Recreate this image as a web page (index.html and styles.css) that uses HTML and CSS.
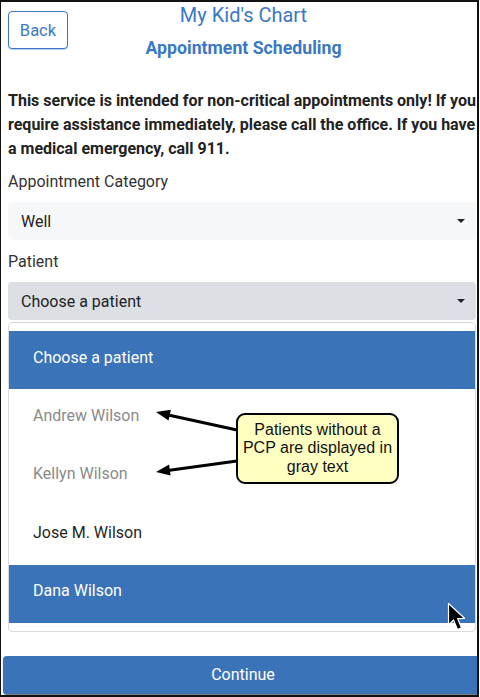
FILE: index.html
```html
<!DOCTYPE html>
<html lang="en">
<head>
<meta charset="utf-8">
<title>My Kid's Chart</title>
<link rel="stylesheet" href="styles.css">
</head>
<body>
<div class="frame">
  <div class="content">
    <header class="header">
      <button class="back">Back</button>
      <div class="titles">
        <div class="app-title">My Kid's Chart</div>
        <div class="page-title">Appointment Scheduling</div>
      </div>
      <div class="spacer"></div>
    </header>

    <p class="warning">This service is intended for non-critical appointments only! If you require assistance immediately, please call the office. If you have a medical emergency, call 911.</p>

    <div class="label label-first">Appointment Category</div>
    <div class="select select-light"><span>Well</span><span class="caret"></span></div>

    <div class="label">Patient</div>
    <div class="select select-open"><span>Choose a patient</span><span class="caret"></span></div>

    <ul class="dropdown">
      <li class="option selected">Choose a patient</li>
      <li class="option muted">Andrew Wilson</li>
      <li class="option muted">Kellyn Wilson</li>
      <li class="option">Jose M. Wilson</li>
      <li class="option selected">Dana Wilson</li>
    </ul>

    <button class="continue">Continue</button>
  </div>

  <svg class="arrows" width="480" height="697" viewBox="0 0 480 697" aria-hidden="true">
    <line x1="237" y1="430" x2="166" y2="414.5" stroke="#000" stroke-width="3"/>
    <polygon points="156,412 168.5,420.5 170.9,409.7" fill="#000"/>
    <line x1="237" y1="461" x2="166" y2="470.7" stroke="#000" stroke-width="3"/>
    <polygon points="156,472 170.6,475.5 169.1,464.6" fill="#000"/>
    <path d="M448.5 603.5 L448.5 625 L453.5 620 L457.5 629.5 L461.5 627.8 L457.6 618.6 L464.5 618.3 Z" fill="#000" stroke="#fff" stroke-width="1.2" stroke-linejoin="round"/>
  </svg>

  <div class="callout">Patients without a PCP are displayed in gray text</div>
</div>
</body>
</html>
```

FILE: styles.css
```css
* {
  box-sizing: border-box;
}

html, body {
  margin: 0;
  padding: 0;
  background: #fff;
}

.frame {
  position: relative;
  width: 479px;
  height: 697px;
  border-top: 2px solid #111;
  border-left: 1px solid #111;
  border-right: 2px solid #111;
  border-bottom: 2px solid #111;
  overflow: hidden;
  font-family: Roboto, "Liberation Sans", sans-serif;
  color: #222;
}

.content {
  padding: 0 1px 0 7px;
}

.header {
  display: grid;
  grid-template-columns: 60px 1fr 60px;
  align-items: start;
}

.back {
  margin-top: 9px;
  width: 60px;
  height: 38px;
  padding: 0;
  background: #fff;
  border: 1px solid #3b78c3;
  border-radius: 4px;
  box-shadow: 0 1px 1px rgba(59, 120, 195, 0.35);
  color: #3b78c3;
  font-family: Roboto, "Liberation Sans", sans-serif;
  font-size: 16.5px;
}

.titles {
  text-align: center;
  padding-left: 3px;
}

.app-title {
  font-size: 20px;
  line-height: 26px;
  color: #3b78c3;
}

.page-title {
  margin-top: 9px;
  font-size: 17.7px;
  line-height: 22px;
  font-weight: 700;
  color: #3b78c3;
  white-space: nowrap;
}

.warning {
  margin: 30px 0 0;
  font-size: 16px;
  line-height: 24px;
  font-weight: 700;
  color: #222;
}

.label {
  margin-top: 11px;
  font-size: 16px;
  line-height: 22px;
  color: #333;
}

.label-first {
  margin-top: 10px;
}

.select {
  margin-top: 9px;
  height: 38px;
  display: flex;
  align-items: center;
  justify-content: space-between;
  padding: 0 11px 0 13px;
  border-radius: 4px;
  font-size: 16px;
  color: #222;
}

.select-light {
  background: #f6f7f8;
}

.select-open {
  background: #dce0e5;
}

.caret {
  width: 0;
  height: 0;
  border-left: 4px solid transparent;
  border-right: 4px solid transparent;
  border-top: 4px solid #222;
}

.dropdown {
  list-style: none;
  margin: 2px 0 0;
  padding: 8px 0 8px;
  border: 1px solid #dadada;
  border-radius: 4px;
}

.option {
  height: 58.4px;
  display: flex;
  align-items: center;
  padding: 0 0 6px 24px;
  font-size: 16px;
  color: #1f1f1f;
}

.option.selected {
  background: #3b73b9;
  color: #fff;
}

.option.muted {
  color: #8a8a8a;
}

.continue {
  display: block;
  margin: 24px 0 0 -5px;
  width: 480px;
  height: 38px;
  border: none;
  border-radius: 4px 0 0 4px;
  background: #3b73b9;
  box-shadow: 0 1px 1px rgba(0, 0, 0, 0.55);
  color: #fff;
  font-family: Roboto, "Liberation Sans", sans-serif;
  font-size: 16px;
  text-align: center;
  padding: 0;
}

.arrows {
  position: absolute;
  left: -1px;
  top: -2px;
  pointer-events: none;
}

.callout {
  position: absolute;
  left: 235px;
  top: 411px;
  width: 163px;
  height: 71px;
  display: flex;
  align-items: center;
  justify-content: center;
  padding: 0;
  background: #ffffc2;
  border: 2.5px solid #000;
  border-radius: 9px;
  font-family: "Liberation Sans", Arial, sans-serif;
  font-size: 16px;
  line-height: 18.5px;
  color: #111;
  text-align: center;
}
```
